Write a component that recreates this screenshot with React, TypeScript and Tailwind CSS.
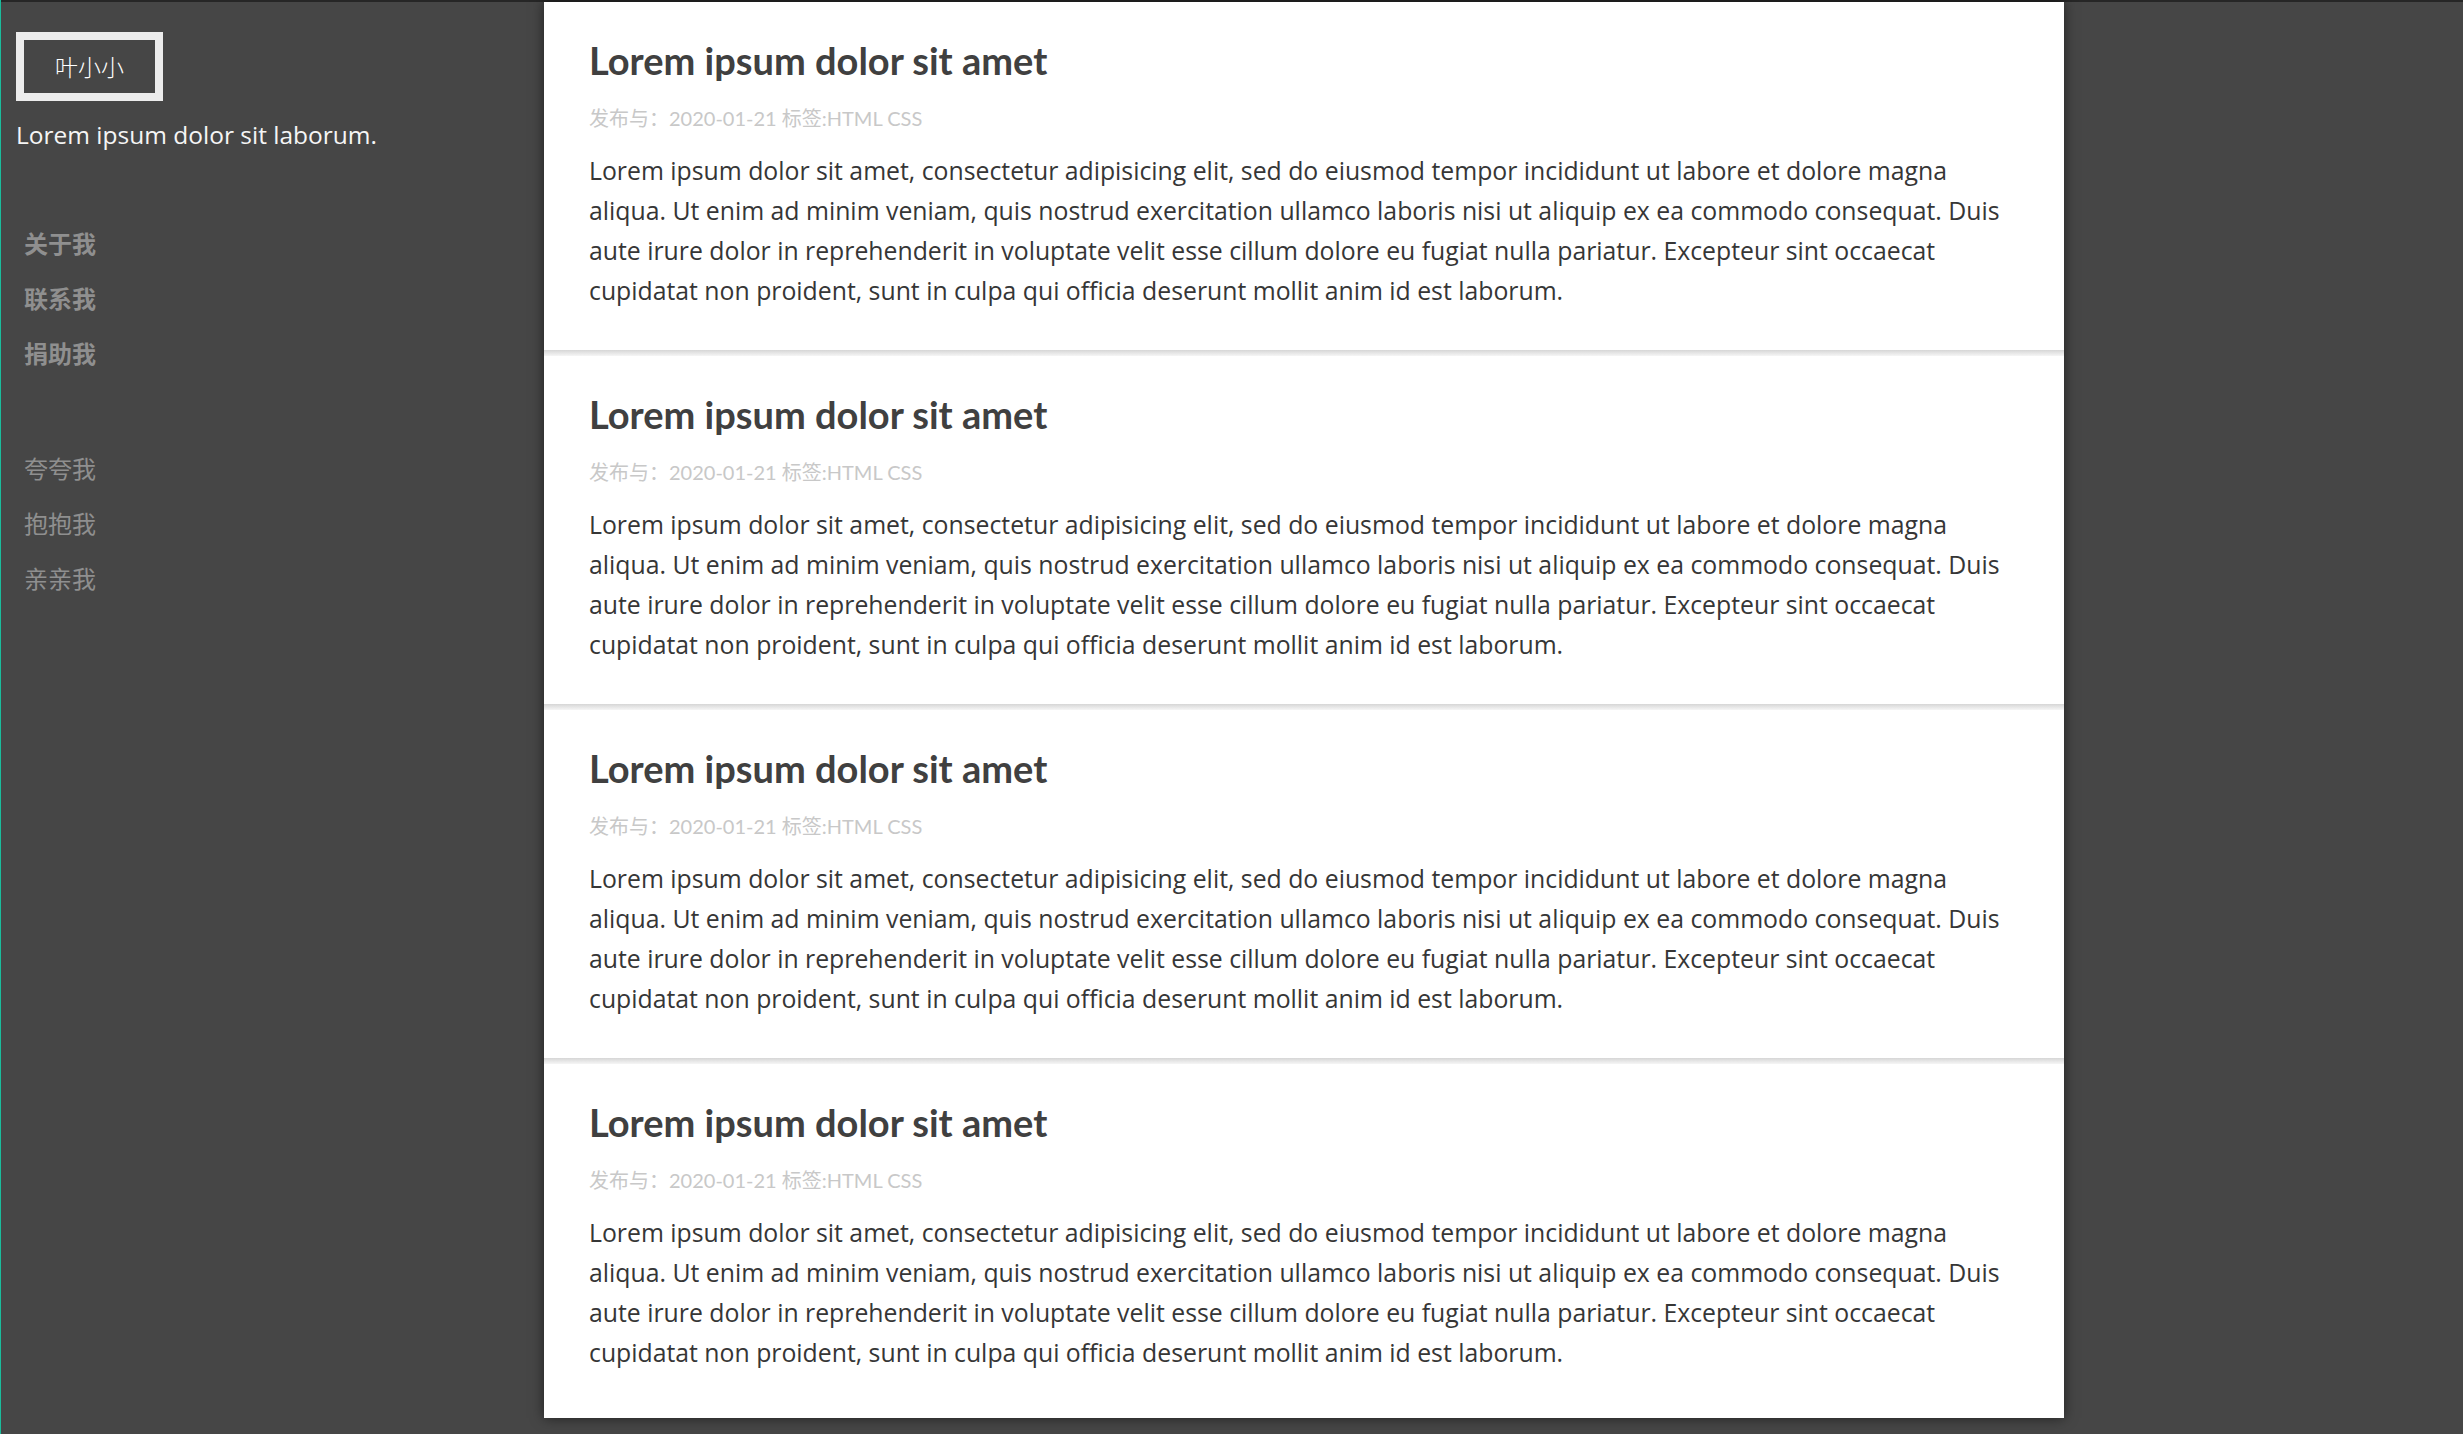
const posts = [1, 2, 3, 4];

const body = [
  "Lorem ipsum dolor sit amet, consectetur adipisicing elit, sed do eiusmod tempor incididunt ut labore et dolore magna",
  "aliqua. Ut enim ad minim veniam, quis nostrud exercitation ullamco laboris nisi ut aliquip ex ea commodo consequat. Duis",
  "aute irure dolor in reprehenderit in voluptate velit esse cillum dolore eu fugiat nulla pariatur. Excepteur sint occaecat",
  "cupidatat non proident, sunt in culpa qui officia deserunt mollit anim id est laborum.",
];

export default function App() {
  return (
    <div className="min-h-[1434px] bg-[#464646] border-l border-[#1abc9c] font-['Lato','Noto_Sans_CJK_SC',sans-serif]">
      <div className="border-t-2 border-[#262626] flex">
        <aside className="w-[543px] shrink-0 pl-[15px] pt-[30px]">
          <div className="w-[147px] h-[69px] border-[8px] border-[#ececec] flex items-center justify-center text-[23px] text-white font-['Noto_Sans_CJK_SC',sans-serif] font-light">
            叶小小
          </div>
          <p className="mt-[16px] text-[24.5px] leading-[36px] text-[#f5f5f5] font-['Open_Sans',sans-serif]">
            Lorem ipsum dolor sit laborum.
          </p>
          <ul className="mt-[62px] pl-[8px] text-[24px] leading-[55px] text-[#8f8f8f] font-['Noto_Sans_CJK_SC',sans-serif]">
            <li className="font-bold">关于我</li>
            <li className="font-bold">联系我</li>
            <li className="font-bold">捐助我</li>
            <li className="mt-[60px]">夸夸我</li>
            <li>抱抱我</li>
            <li>亲亲我</li>
          </ul>
        </aside>

        <main className="w-[1520px] shrink-0 bg-white shadow-[0_0_12px_rgba(0,0,0,0.55)] pb-[6px]">
          {posts.map((p, i) => (
            <article key={p}>
              <div className="px-[45px] pt-[36px] pb-[40px]">
                <h2 className="text-[38px] leading-[44px] font-bold text-[#404040]">
                  Lorem ipsum dolor sit amet
                </h2>
                <div className="mt-[22px] text-[20px] leading-[28px] text-[#c8c8c8]">
                  发布与：2020-01-21 标签:HTML CSS
                </div>
                <p className="mt-[18px] text-[24.8px] leading-[40px] text-[#363636] whitespace-nowrap font-['Open_Sans',sans-serif]">
                  {body.map((line) => (
                    <span key={line} className="block">
                      {line}
                    </span>
                  ))}
                </p>
              </div>
              {i < posts.length - 1 && (
                <div className="h-[6px] bg-linear-to-b from-[#d6d6d6] to-[#f6f6f6]" />
              )}
            </article>
          ))}
        </main>
      </div>
    </div>
  );
}
